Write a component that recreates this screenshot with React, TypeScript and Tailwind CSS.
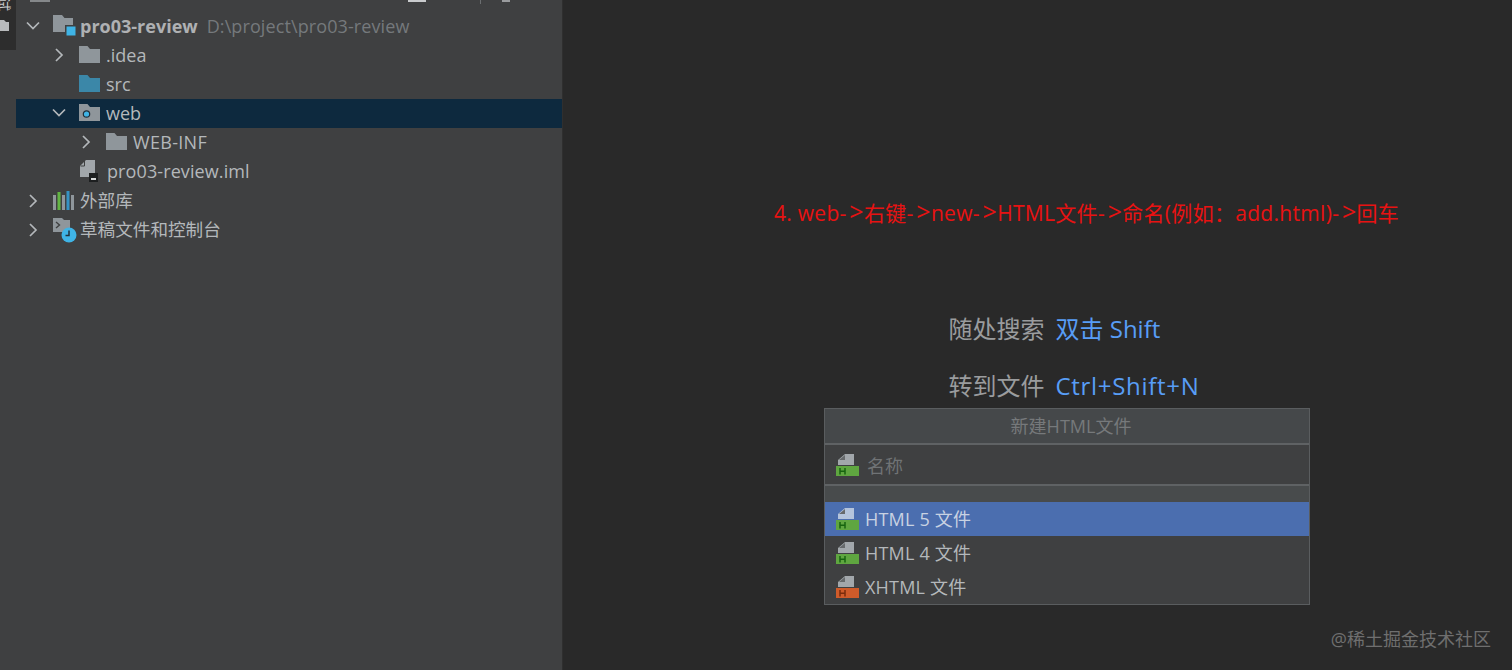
const cjk = "font-['Open_Sans','Noto_Sans_CJK_SC',sans-serif]";

function Chevron({ open }: { open?: boolean }) {
  return (
    <svg width="14" height="14" viewBox="0 0 14 14" fill="none" stroke="#b4b8bb" strokeWidth="1.7">
      {open ? <path d="M1 3.5l6 6 6-6" /> : <path d="M4 1l6 6-6 6" />}
    </svg>
  );
}

function Folder({ color = "#8f969b", dot }: { color?: string; dot?: boolean }) {
  return (
    <svg width="21" height="17" viewBox="0 0 21 17">
      <path d="M0 0h8.5l2.5 3h10v14H0z" fill={color} />
      {dot && <circle cx="7.5" cy="10" r="3.2" fill="#3fb4e6" stroke="#23303a" strokeWidth="1.2" />}
    </svg>
  );
}

function ModuleIcon() {
  return (
    <svg width="24" height="24" viewBox="0 0 24 24">
      <path d="M0 1h9l2.5 3H20v14H0z" fill="#8f969b" />
      <rect x="12" y="11" width="11" height="11" fill="#3f4041" />
      <rect x="13.5" y="12.5" width="9" height="9" fill="#3fb4e6" />
    </svg>
  );
}

function ImlIcon() {
  return (
    <svg width="20" height="22" viewBox="0 0 20 22">
      <path d="M6 0h9v17H0V6z" fill="#a2a7ab" />
      <path d="M4.5 1v5h-4" fill="none" stroke="#3f4041" strokeWidth="1" />
      <rect x="9" y="13" width="9" height="9" fill="#1d1f20" />
      <rect x="11" y="18" width="5" height="2" fill="#d7d9da" />
    </svg>
  );
}

function LibIcon() {
  return (
    <svg width="21" height="20" viewBox="0 0 21 20">
      <rect x="0" y="4" width="3" height="15" fill="#8f969b" />
      <rect x="4.5" y="1" width="3" height="18" fill="#62b543" />
      <rect x="9" y="4" width="3" height="15" fill="#8f969b" />
      <rect x="13.5" y="0" width="3" height="19" fill="#3592c4" />
      <rect x="18" y="4" width="3" height="15" fill="#8f969b" />
    </svg>
  );
}

function ScratchIcon() {
  return (
    <svg width="24" height="26" viewBox="0 0 24 26">
      <path d="M0 1h9l2 2h6v12H0z" fill="#8f969b" />
      <path d="M3 5l3.5 3L3 11" fill="none" stroke="#3f4041" strokeWidth="1.4" />
      <circle cx="16" cy="18" r="7.5" fill="#3fb4e6" />
      <path d="M16 13.5V18.5H12.5" fill="none" stroke="#20323c" strokeWidth="1.5" />
    </svg>
  );
}

function HtmlIcon({ color = "#5fa640", letter = "#17640f", page = "#a2a7ab" }: { color?: string; letter?: string; page?: string }) {
  return (
    <svg width="23" height="22" viewBox="0 0 23 22">
      <path d="M9 0h9v11H2V6z" fill={page} />
      <path d="M9 1v5H3z" fill="#66696b" />
      <rect x="0" y="12" width="23" height="10" fill={color} />
      <path d="M4 14v6.5M9 14v6.5M4 17.2H9" stroke={letter} strokeWidth="1.5" fill="none" />
    </svg>
  );
}

function Arrow() {
  return (
    <>
      <span className="tracking-[3px]">-</span>
      <span className="text-[25px] leading-none">&gt;</span>
    </>
  );
}

function TreeRow({
  indent,
  chevron,
  icon,
  selected,
  children,
}: {
  indent: string;
  chevron?: "open" | "closed";
  icon: React.ReactNode;
  selected?: boolean;
  children: React.ReactNode;
}) {
  return (
    <div className={`h-[29px] pb-[2px] flex items-center ${indent} ${selected ? "bg-[#0d293e]" : ""}`}>
      <span className="w-[26px] flex-shrink-0">{chevron && <Chevron open={chevron === "open"} />}</span>
      <span className="w-[28px] pl-[1px] flex-shrink-0 flex items-center">{icon}</span>
      {children}
    </div>
  );
}

function PopupItem({ label, selected, orange }: { label: string; selected?: boolean; orange?: boolean }) {
  return (
    <div className={`h-[34px] flex items-center pl-[11px] gap-[6px] text-[18px] ${selected ? "bg-[#4b6eaf] text-[#c8d2e2]" : "text-[#b4b8bb]"}`}>
      <HtmlIcon
        color={orange ? "#cf5b2a" : "#5fa640"}
        letter={orange ? "#7a2c0c" : "#17640f"}
        page={selected ? "#b4c4dc" : "#a2a7ab"}
      />
      <span className={`tracking-[0.2px] ${selected ? "mt-[1px]" : ""}`}>{label}</span>
    </div>
  );
}

export default function App() {
  return (
    <div className={`relative h-[670px] w-[1512px] overflow-hidden flex bg-[#292929] ${cjk}`}>
      {/* left tool rail */}
      <div className="w-[16px] flex-shrink-0 bg-[#3f4041] flex flex-col">
        <div className="h-[50px] bg-[#2d2d2d] overflow-hidden flex flex-col items-start">
          <span className="mt-[-4px] ml-[-3px] text-[14px] leading-[16px] rotate-90 text-[#c9cbcd]">试</span>
          <svg className="mt-[8px]" width="10" height="11" viewBox="0 0 10 11">
            <path d="M0 0h4l2 2h3v9H0z" fill="#b8babc" />
          </svg>
        </div>
      </div>

      {/* project tree */}
      <div className="relative w-[546px] flex-shrink-0 bg-[#3f4041] pt-[12px] text-[18px] leading-none text-[#b4b8bb]">
        <TreeRow indent="pl-[10px]" chevron="open" icon={<ModuleIcon />}>
          <span className="font-bold text-[#afb1b3]">pro03-review</span>
          <span className="ml-[9px] text-[#75797c] tracking-[0.1px]">D:\project\pro03-review</span>
        </TreeRow>
        <TreeRow indent="pl-[36px]" chevron="closed" icon={<Folder />}>.idea</TreeRow>
        <TreeRow indent="pl-[36px]" icon={<Folder color="#3b87a8" />}>src</TreeRow>
        <TreeRow indent="pl-[36px]" chevron="open" icon={<Folder dot />} selected>web</TreeRow>
        <TreeRow indent="pl-[63px]" chevron="closed" icon={<Folder />}><span className="tracking-[0.3px]">WEB-INF</span></TreeRow>
        <TreeRow indent="pl-[37px]" icon={<ImlIcon />}><span className="tracking-[0.1px]">pro03-review.iml</span></TreeRow>
        <div className="mt-[1px] text-[17.6px]">
          <TreeRow indent="pl-[10px]" chevron="closed" icon={<LibIcon />}>外部库</TreeRow>
          <TreeRow indent="pl-[10px]" chevron="closed" icon={<ScratchIcon />}>草稿文件和控制台</TreeRow>
        </div>
        {/* cut-off toolbar icons along the top edge */}
        <span className="absolute left-[14px] top-0 w-[20px] h-[2px] bg-[#85888a]" />
        <span className="absolute left-[392px] top-0 w-[18px] h-[2px] bg-[#c9cbcd]" />
        <span className="absolute left-[464px] top-0 w-[1px] h-[4px] bg-[#6b6e70]" />
        <span className="absolute left-[486px] top-0 w-[8px] h-[2px] bg-[#9a9c9e]" />
      </div>

      {/* editor empty state */}
      <div className="relative flex-1 bg-[#292929] border-l border-[#2f2f2f] flex flex-col items-center pt-[199px]">
        <div className="ml-[98px] h-[28px] text-[21px] leading-[28px] text-[#e81212] tracking-[0.3px] whitespace-nowrap">
          4. web<Arrow />右键<Arrow />new<Arrow />HTML文件<Arrow />命名(例如：add.html)<Arrow />回车
        </div>
        <div className="mt-[85px] flex flex-col gap-[24px] text-[24px] leading-[33px]">
          <div className="flex gap-[11px] ml-[73px]">
            <span className="text-[#9a9c9e]">随处搜索</span>
            <span className="text-[#589df6]">双击 Shift</span>
          </div>
          <div className="flex gap-[11px] ml-[73px]">
            <span className="text-[#9a9c9e]">转到文件</span>
            <span className="text-[#589df6] tracking-[0.7px]">Ctrl+Shift+N</span>
          </div>
        </div>

        {/* new file popup */}
        <div className="absolute left-[261px] top-[408px] w-[486px] h-[197px] bg-[#3f4041] border border-[#5a5d5f]">
          <div className="h-[36px] pl-[8px] flex items-center justify-center text-[18px] text-[#76797b] bg-[#45484a] border-b-2 border-[#5f6264]">
            新建HTML文件
          </div>
          <div className="h-[41px] flex items-center pl-[11px] gap-[8px] text-[18px] text-[#707375] border-b-2 border-[#5f6264]">
            <HtmlIcon />
            <span className="mt-[3px]">名称</span>
          </div>
          <div className="h-[16px] bg-[#484b4c]" />
          <PopupItem label="HTML 5 文件" selected />
          <PopupItem label="HTML 4 文件" />
          <PopupItem label="XHTML 文件" orange />
        </div>

        <div className="absolute right-[21px] top-[627px] text-[18px] leading-[24px] text-[#6f6f6f]">
          @稀土掘金技术社区
        </div>
      </div>
    </div>
  );
}
